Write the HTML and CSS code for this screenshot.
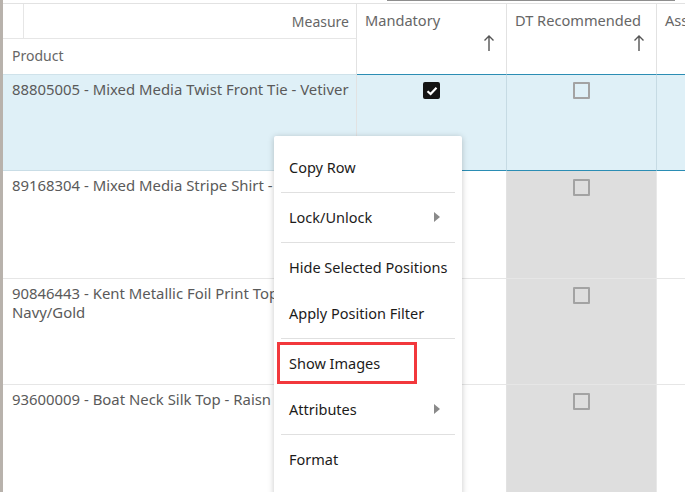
FILE: index.html
```html
<!DOCTYPE html>
<html lang="en">
<head>
<meta charset="utf-8">
<title>Assortment grid</title>
<link rel="stylesheet" href="styles.css">
</head>
<body>
<div class="frame">
  <div class="scroll-thumb"></div>
  <div class="grid">
    <div class="corner">
      <div class="corner-stub"></div>
      <div class="measure">Measure</div>
    </div>
    <div class="col-head span2">
      <span class="col-title">Mandatory</span>
      <svg class="sort" width="12" height="18" viewBox="0 0 12 18"><path d="M6 2v15M1.5 6.5 6 2l4.5 4.5" fill="none" stroke="#555" stroke-width="1.4"/></svg>
    </div>
    <div class="col-head span2">
      <span class="col-title">DT Recommended</span>
      <svg class="sort" width="12" height="18" viewBox="0 0 12 18"><path d="M6 2v15M1.5 6.5 6 2l4.5 4.5" fill="none" stroke="#555" stroke-width="1.4"/></svg>
    </div>
    <div class="col-head span2 last">
      <span class="col-title">Assortment Status</span>
    </div>
    <div class="product-head">Product</div>

    <div class="row-head sel r1">88805005 - Mixed Media Twist Front Tie - Vetiver</div>
    <div class="cell sel r1"><span class="check on"><svg width="12" height="10" viewBox="0 0 12 10"><path d="M1.5 5.2 4.6 8 10.5 1.8" fill="none" stroke="#fff" stroke-width="2.2"/></svg></span></div>
    <div class="cell sel r1"><span class="check"></span></div>
    <div class="cell sel r1"></div>

    <div class="row-head r2">89168304 - Mixed Media Stripe Shirt - Blue/White</div>
    <div class="cell r2"><span class="check"></span></div>
    <div class="cell ro r2"><span class="check"></span></div>
    <div class="cell r2"></div>

    <div class="row-head r3">90846443 - Kent Metallic Foil Print Top -<br>Navy/Gold</div>
    <div class="cell r3"><span class="check"></span></div>
    <div class="cell ro r3"><span class="check"></span></div>
    <div class="cell r3"></div>

    <div class="row-head r4">93600009 - Boat Neck Silk Top - Raisn</div>
    <div class="cell r4"><span class="check"></span></div>
    <div class="cell ro r4"><span class="check"></span></div>
    <div class="cell r4"></div>
  </div>

  <ul class="menu">
    <li class="item">Copy Row</li>
    <li class="sep"></li>
    <li class="item sub">Lock/Unlock</li>
    <li class="sep"></li>
    <li class="item">Hide Selected Positions</li>
    <li class="item">Apply Position Filter</li>
    <li class="sep"></li>
    <li class="item marked">Show Images</li>
    <li class="item sub">Attributes</li>
    <li class="sep"></li>
    <li class="item">Format</li>
  </ul>
</div>
</body>
</html>
```
FILE: styles.css
```css
html, body {
  margin: 0;
  padding: 0;
  background: #fff;
  overflow: hidden;
}

body {
  font-family: "Noto Sans", "Open Sans", sans-serif;
  width: 685px;
  height: 492px;
}

.frame {
  position: relative;
  height: 492px;
  overflow: hidden;
  border-left: 3px solid #b8b2ac;
  padding-top: 3px;
  box-sizing: border-box;
}

/* horizontal scrollbar thumb edge peeking in at the top */
.scroll-thumb {
  position: absolute;
  top: 0;
  left: 384px;
  width: 288px;
  height: 1px;
  background: #8e8e8e;
}

.grid {
  display: grid;
  grid-template-columns: 354px 150px 150px 150px;
  grid-template-rows: 35px 35px 97px 108px 106px 108px;
  border-top: 1px solid #e2e2e2;
  width: 804px;
  color: #5a5a5a;
}

.corner {
  display: flex;
  border-bottom: 1px solid #e6e6e6;
  border-right: 1px solid #e2e2e2;
}

.corner-stub {
  width: 20px;
  border-right: 1px solid #e6e6e6;
}

.measure {
  flex: 1;
  text-align: right;
  padding-right: 7px;
  font-size: 14px;
  line-height: 20px;
  padding-top: 8px;
  color: #666;
}

.product-head {
  grid-column: 1;
  grid-row: 2;
  padding: 7px 0 0 9px;
  font-size: 14px;
  line-height: 20px;
  color: #666;
  border-right: 1px solid #e2e2e2;
}

.col-head {
  position: relative;
  border-right: 1px solid #e2e2e2;
  padding: 6px 0 0 8px;
  font-size: 14.6px;
  line-height: 20px;
  color: #666;
  white-space: nowrap;
}

.span2 { grid-row: 1 / span 2; }

.col-head .sort {
  position: absolute;
  right: 11px;
  bottom: 22px;
}

.row-head {
  grid-column: 1;
  padding: 5px 0 0 9px;
  font-size: 14.9px;
  line-height: 19px;
  border-right: 1px solid #e2e2e2;
  border-bottom: 1px solid #e6e6e6;
  white-space: nowrap;
  overflow: hidden;
}

.cell {
  display: flex;
  justify-content: center;
  align-items: flex-start;
  padding-top: 8px;
  border-right: 1px solid #e2e2e2;
  border-bottom: 1px solid #e6e6e6;
}

.cell.ro { background: #dedede; border-right-color: #e8e8e8; }

.sel { background: #dff0f7; }
.row-head.sel { border-top: 1px solid #cfe2ea; border-bottom: 1px solid #c9dde6; }
.cell.sel {
  border-top: 1px solid #2b8db4;
  border-bottom: 1px solid #2b8db4;
  border-right-color: #c6dbe4;
  padding-top: 7px;
}

.check {
  width: 13px;
  height: 13px;
  border: 2px solid #a3a3a3;
  border-radius: 1px;
  display: flex;
  align-items: center;
  justify-content: center;
}

.check.on {
  background: #141414;
  border-color: #141414;
  border-radius: 2px;
}

/* context menu */
.menu {
  position: absolute;
  left: 271px;
  top: 136px;
  width: 188px;
  margin: 0;
  padding: 8px 0 40px;
  list-style: none;
  background: #fff;
  box-shadow: 0 1px 6px rgba(0, 0, 0, 0.22);
  border-radius: 2px;
  color: #1c1b1a;
}

.item {
  position: relative;
  height: 46px;
  line-height: 46px;
  padding-left: 15px;
  font-size: 14.5px;
  white-space: nowrap;
}

.sep {
  height: 1px;
  margin: 2px 7px 1px;
  background: #e0e0e0;
}

.item.sub::after {
  content: "";
  position: absolute;
  right: 22px;
  top: 18px;
  border-left: 6px solid #8a8a8a;
  border-top: 5px solid transparent;
  border-bottom: 5px solid transparent;
}

.item.marked::before {
  content: "";
  position: absolute;
  left: 3px;
  top: 2px;
  width: 134px;
  height: 36px;
  border: 3px solid #f2383c;
}
```
